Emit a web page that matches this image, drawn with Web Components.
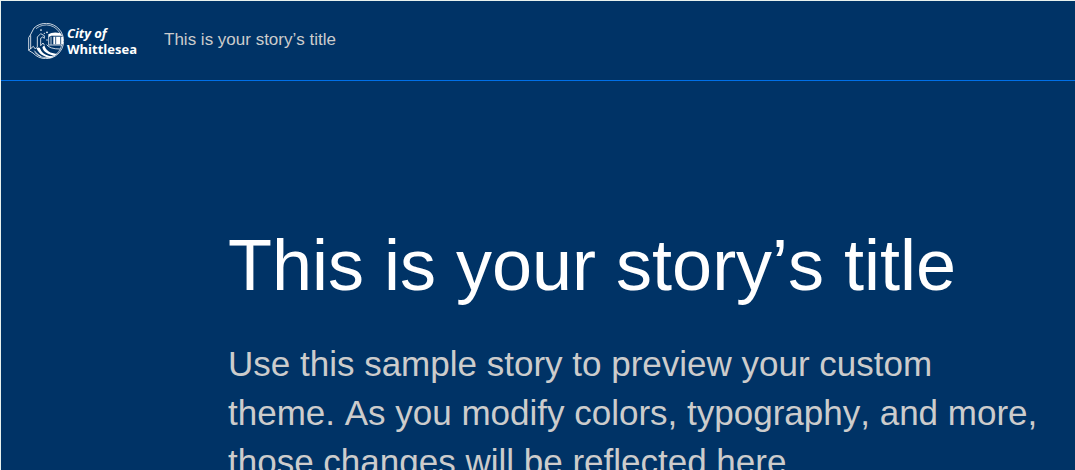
<!DOCTYPE html>
<html lang="en">
<head>
<meta charset="utf-8">
<title>This is your story’s title</title>
<style>
html { background: #003366; }
body { margin: 0; font-family: "Liberation Sans", Arial, sans-serif; font-kerning: none; }
</style>
</head>
<body>
<story-page>
  <story-header slot="header">This is your story’s title</story-header>
  <story-cover>
    <span slot="title">This is your story’s title</span>
    Use this sample story to preview your custom theme. As you modify colors, typography, and more, those changes will be reflected here.
  </story-cover>
</story-page>
<script>
function define(name, markup) {
  const template = document.createElement('template');
  template.innerHTML = markup;
  customElements.define(name, class extends HTMLElement {
    constructor() {
      super();
      this.attachShadow({ mode: 'open' }).append(template.content.cloneNode(true));
    }
  });
}

define('council-logo', `
<style>
:host { display: block; }
a { display: flex; align-items: center; gap: 3px; color: #fff; text-decoration: none; }
svg { display: block; width: 36px; height: 36px; }
.name { display: flex; flex-direction: column; font: 700 13px/16px "Open Sans", "Noto Sans", sans-serif; }
em { font-style: italic; }
</style>
<a href="#">
  <svg viewBox="0 0 108 108" fill="none" stroke="#fff" stroke-width="2.4" aria-hidden="true">
    <path d="M18 15A53 53 0 1 1 15 90"/>
    <path d="M24 17A47 47 0 0 1 99 38M101 66A47 47 0 0 1 20 88" stroke-width="2"/>
    <path d="M18 15L7 36L2 44V82L15 90M8 37V78M2 82L16 70L22 78L28 72V42L38 32L49 38V46L44 42L38 46V68L45 60L49 66"/>
    <g fill="#fff" stroke="none">
      <circle cx="39" cy="21" r="2.6"/><circle cx="57" cy="28" r="2.6"/><circle cx="49" cy="31" r="1.8"/><circle cx="57" cy="51" r="2"/>
      <path d="M61 34Q73 26 96 30L104 38H70L61 43Z"/>
      <path d="M76 41H105V64H76Z"/>
      <path d="M26 76Q35 70 37 78C43 93 58 99 78 101L67 105C48 102 31 92 26 76Z"/>
      <path d="M43 73L49 67C54 84 67 91 87 93L80 98C60 95 46 87 43 73Z"/>
    </g>
    <path d="M83 41V64M98 41V64" stroke="#003366"/>
    <path d="M62 41V65M69 41V65M56 65Q65 78 96 78M60 66H103M19 83Q26 94 40 101" stroke-width="2.4"/>
  </svg>
  <span class="name"><em>City of</em><span>Whittlesea</span></span>
</a>`);

define('story-header', `
<style>
:host { display: block; border-bottom: 1px solid #0070e8; }
header { display: flex; align-items: center; gap: 27px; height: 79px; padding: 0 27px; box-sizing: border-box; color: #ccc; }
council-logo { padding-top: 1px; }
.title { font-size: 17px; line-height: 24px; padding-bottom: 2px; }
</style>
<header><council-logo></council-logo><span class="title"><slot></slot></span></header>`);

define('story-cover', `
<style>
:host { display: block; }
section { max-width: 820px; padding: 142px 0 48px; margin-left: calc((100% - 620px) / 2); }
h1 { margin: 0 0 32px; color: #fff; font-size: 72px; font-weight: 400; line-height: 84px; }
p { margin: 0; color: #ccc; font-size: 35px; line-height: 49px; }
</style>
<section><h1><slot name="title"></slot></h1><p><slot></slot></p></section>`);

define('story-page', `
<style>
:host { display: block; box-sizing: border-box; height: 100vh; overflow: hidden; background: #003366; border: solid #e8f2ee; border-width: 1px 0 0 1px; }
</style>
<slot name="header"></slot><main><slot></slot></main>`);
</script>
</body>
</html>
